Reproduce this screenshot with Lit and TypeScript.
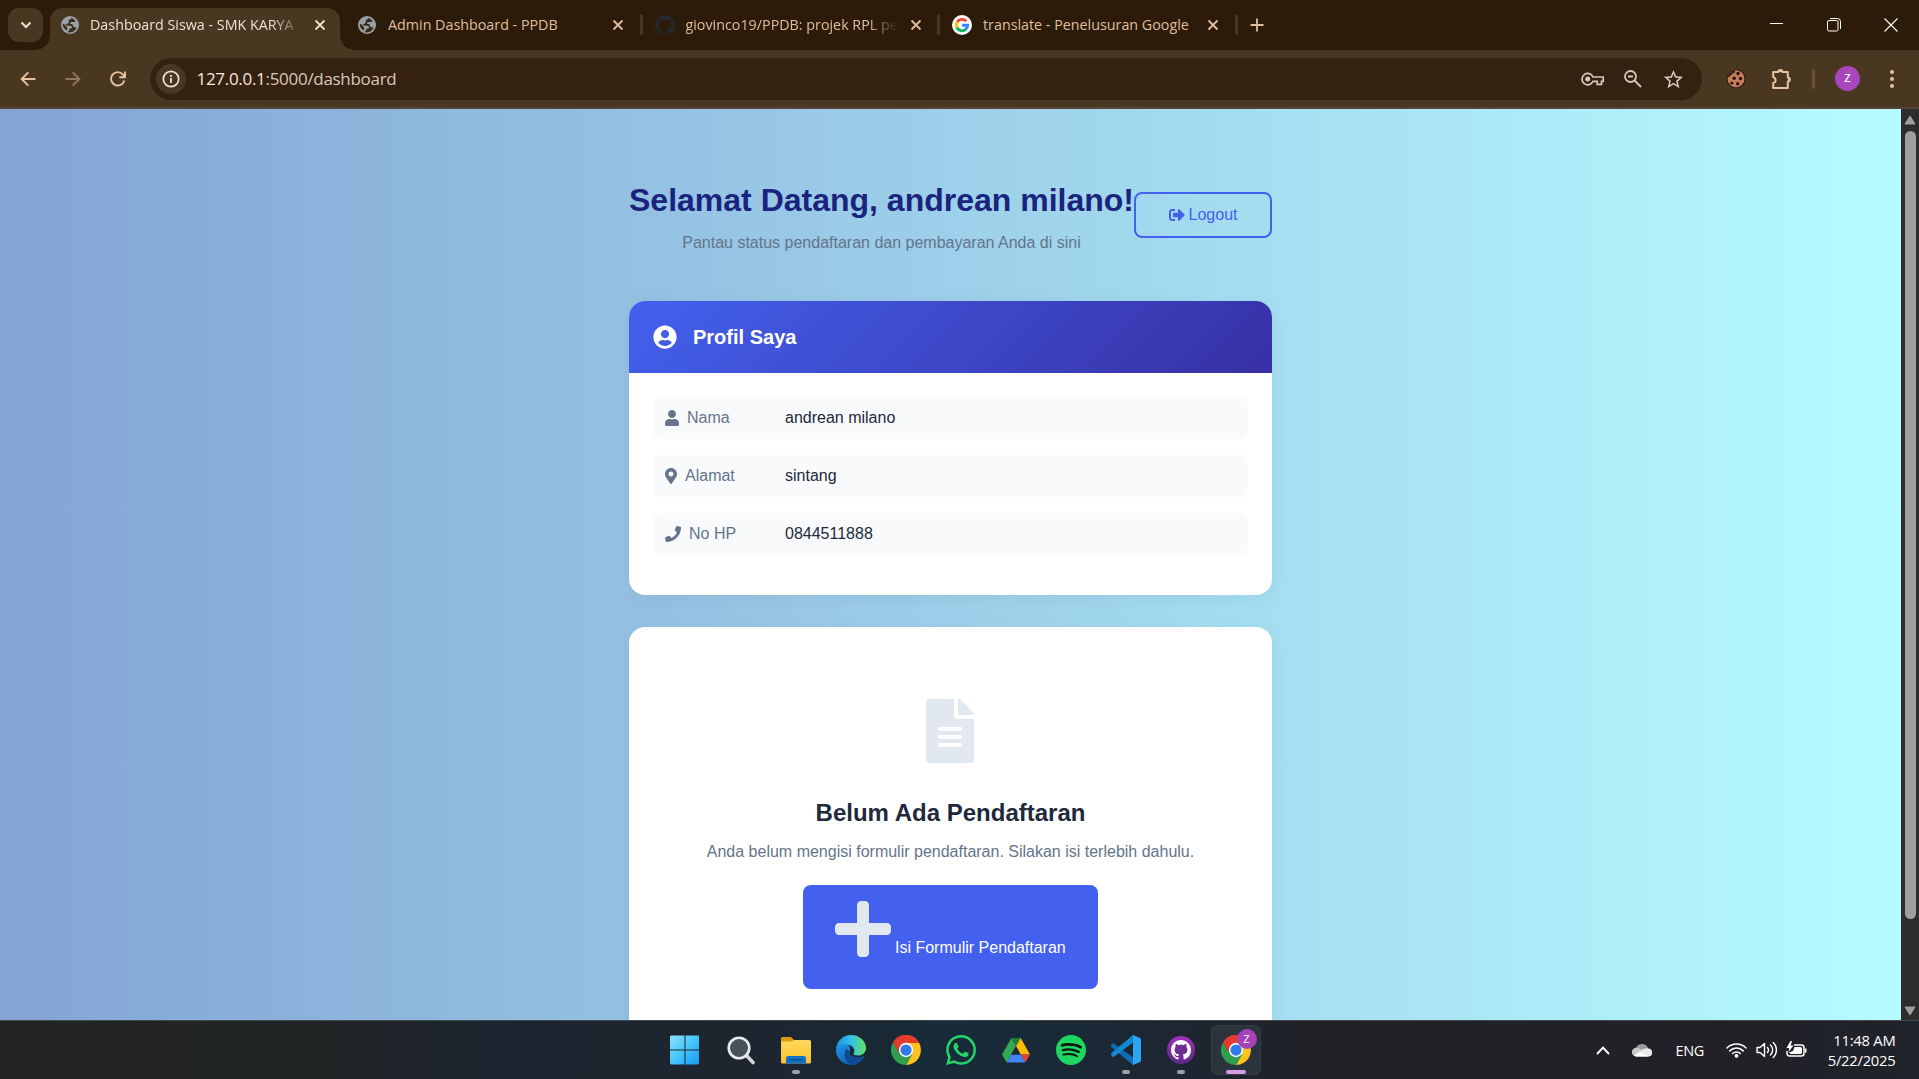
import { LitElement, html, svg, css, nothing } from "lit";
import { customElement } from "lit/decorators.js";

const GITHUB =
  "M8 0C3.58 0 0 3.58 0 8c0 3.54 2.29 6.53 5.47 7.59.4.07.55-.17.55-.38 0-.19-.01-.82-.01-1.49-2.01.37-2.53-.49-2.69-.94-.09-.23-.48-.94-.82-1.13-.28-.15-.68-.52-.01-.53.63-.01 1.08.58 1.23.82.72 1.21 1.87.87 2.33.66.07-.52.28-.87.51-1.07-1.78-.2-3.64-.89-3.64-3.95 0-.87.31-1.59.82-2.15-.08-.2-.36-1.02.08-2.12 0 0 .67-.21 2.2.82.64-.18 1.32-.27 2-.27s1.36.09 2 .27c1.53-1.04 2.2-.82 2.2-.82.44 1.1.16 1.92.08 2.12.51.56.82 1.27.82 2.15 0 3.07-1.87 3.75-3.65 3.95.29.25.54.73.54 1.48 0 1.07-.01 1.93-.01 2.2 0 .21.15.46.55.38A8.01 8.01 0 0 0 16 8c0-4.42-3.58-8-8-8z";

const icon = (w: number, h: number, viewBox: string, body: unknown) =>
  html`<svg class="icon" width=${w} height=${h} viewBox=${viewBox} fill="none">${body}</svg>`;

const fa = (w: number, h: number, box: number, d: string) =>
  icon(w, h, `0 0 ${box} 512`, svg`<path fill="currentColor" d=${d}></path>`);

const closeIcon = () =>
  icon(12, 12, "0 0 12 12", svg`<path d="M1.5 1.5l9 9M10.5 1.5l-9 9" stroke="currentColor" stroke-width="1.8"></path>`);

const globeIcon = () =>
  icon(18, 18, "0 0 18 18", svg`
    <circle cx="9" cy="9" r="9" fill="#9aa0a8"></circle>
    <path fill="#3c2c1b" d="M10.6 1.9C10.2 3.3 8.6 3.1 7.9 4.3c-.5.9.2 1.9-.3 2.7-.7 1-2.3.4-2.6 1.6-.2 1 1.2 1.1 2.3 1.1 1.3 0 3.3-.1 3.7 1 .3 1-.6 1.6-1.6 1.7-1.1.2-.9 1.3-1.5 2-.6.7-1.3 1.2-1.3 1.9A7.2 7.2 0 0 0 9 16.3 7.3 7.3 0 0 0 15.7 11.2c-1.2.5-2.5.3-3.2-.6-.8-1-.2-2-1.2-2.4-.9-.3-2.2.1-2.3-.9-.1-.9 1.1-1 2-1.2 1.2-.2 2.900-.1 3.600-.9A7.300 7.300 0 0 0 10.600 1.900z"></path>
    <path fill="#3c2c1b" d="M1.8 7.8c1.3.2 2.4 1.2 3.1 2.1.7.9 1.6 1.3 1.5 2.3-.1.9-.7 1.5-1 2.2A7.3 7.3 0 0 1 1.8 7.8z"></path>`);

const googleIcon = () =>
  icon(20, 20, "0 0 20 20", svg`
    <circle cx="10" cy="10" r="10" fill="#fff"></circle>
    <g stroke-width="2.9" fill="none">
      <path d="M14.2 6.2A5.7 5.7 0 0 0 5.1 7.1" stroke="#ff4131"></path>
      <path d="M5.3 6.8A5.7 5.7 0 0 0 5.2 13" stroke="#ffc107"></path>
      <path d="M4.9 12.5A5.7 5.7 0 0 0 13.8 14.3" stroke="#11b557"></path>
      <path d="M13.4 14.6A5.7 5.7 0 0 0 15.7 10.2H10.2" stroke="#3186ff"></path>
    </g>`);

const chromeIcon = () =>
  icon(30, 30, "0 0 48 48", svg`
    <path fill="#e33b2e" d="M24 24L3.2 12A24 24 0 0 1 44.8 12z"></path>
    <path fill="#fcc31e" d="M24 12.500H45A24 24 0 0 1 24 48L34 30z"></path>
    <path fill="#2f9e4f" d="M3.200 12L14 30 34 30 24 48A24 24 0 0 1 3.200 12z"></path>
    <path fill="#e33b2e" d="M3.200 12A24 24 0 0 1 45 12.500H24L14 18 13.500 29.500z"></path>
    <circle cx="24" cy="24" r="11.5" fill="#fff"></circle>
    <circle cx="24" cy="24" r="9" fill="#2f7bea"></circle>`);

@customElement("browser-chrome")
class BrowserChrome extends LitElement {
  static styles = css`
    :host { display: block; font-family: "Open Sans", "Noto Sans", sans-serif; }
    .icon { display: block; flex: none; }
    .strip { display: flex; height: 50px; background: #2d1b09; color: #dfbe9e; }
    .search { width: 35px; height: 34px; margin: 8px 3px 0 8px; border-radius: 11px; background: #4a3721; color: #f3dfd2; display: grid; place-items: center; }
    .tab { position: relative; width: 297.5px; box-sizing: border-box; height: 50px; display: flex; align-items: center; padding: 0 17px 0 13.5px; font-size: 14.3px; }
    .tab.active { width: 290px; height: 42px; margin: 8px 3.5px 0 4px; padding: 0 14px 8px 10px; background: #4a3721; border-radius: 13px 13px 0 0; color: #f3dfd2; }
    .tab.active::before, .tab.active::after { content: ""; position: absolute; bottom: 0; width: 14px; height: 14px; }
    .tab.active::before { left: -14px; background: radial-gradient(circle at 0 0, transparent 13.5px, #4a3721 14px); }
    .tab.active::after { right: -14px; background: radial-gradient(circle at 100% 0, transparent 13.5px, #4a3721 14px); }
    .fav { width: 20px; display: flex; justify-content: center; margin-right: 11px; flex: none; }
    .active .fav { margin-right: 10px; }
    .title { flex: none; width: 210px; white-space: nowrap; overflow: hidden; line-height: 24px; }
    .title.fade { -webkit-mask-image: linear-gradient(90deg, #000 182px, transparent 212px); mask-image: linear-gradient(90deg, #000 182px, transparent 212px); }
    .close { margin-left: auto; }
    .tab.line::after { content: ""; position: absolute; right: -1.5px; top: 14px; width: 3px; height: 21px; border-radius: 2px; background: #4a3721; }
    .plus { width: 42px; height: 50px; display: grid; place-items: center; }
    .controls { margin-left: auto; display: flex; color: #fff; height: 49px; }
    .ctl { width: 57px; display: grid; place-items: center; }
    .bar { display: flex; align-items: center; height: 57px; background: #4a3721; border-bottom: 2px solid #56443a; color: #e7c3a3; }
    .nav { display: flex; width: 150px; box-sizing: border-box; padding-left: 5px; }
    .nav span { width: 45px; display: grid; place-items: center; }
    .dim { opacity: .45; }
    .omni { width: 1552px; height: 42px; margin-top: 1px; border-radius: 21px; background: #35210f; display: flex; align-items: center; box-sizing: border-box; padding: 0 9px 0 6px; color: #d8c7bb; }
    .info { width: 30px; height: 30px; border-radius: 50%; background: #4a3721; display: grid; place-items: center; color: #f3dfd2; }
    .url { margin-left: 10.5px; font-size: 17px; line-height: 28px; letter-spacing: -0.3px; flex: 1; white-space: nowrap; }
    .host { color: #f7e9df; }
    .slot { width: 40px; display: grid; place-items: center; }
    .tools { display: flex; align-items: center; padding-left: 11px; }
    .tools .slot { width: 46px; }
    .sep { width: 3px; height: 20px; background: #6a4e36; border-radius: 2px; margin: 0 20px 0 7px; }
    .avatar { width: 25px; height: 25px; border-radius: 50%; background: #a846bb; color: #fff; font-size: 11px; font-weight: 600; line-height: 24px; text-align: center; }
    .dots { margin-left: 29px; }
  `;

  private tab(fav: unknown, title: string, cls = "", fade = false) {
    return html`<div class="tab ${cls}">
      <span class="fav">${fav}</span>
      <span class="title ${fade ? "fade" : ""}">${title}</span>
      <span class="close">${closeIcon()}</span>
    </div>`;
  }

  render() {
    return html`
      <div class="strip">
        <div class="search">${icon(12, 8, "0 0 12 8", svg`<path d="M1.5 1.5L6 6l4.5-4.5" stroke="currentColor" stroke-width="2"></path>`)}</div>
        ${this.tab(globeIcon(), "Dashboard Siswa - SMK KARYA", "active", true)}
        ${this.tab(globeIcon(), "Admin Dashboard - PPDB", "line")}
        ${this.tab(icon(20, 20, "0 0 16 16", svg`<path fill="#24292f" d=${GITHUB}></path>`), "giovinco19/PPDB: projek RPL pe", "line", true)}
        ${this.tab(googleIcon(), "translate - Penelusuran Google", "line")}
        <div class="plus">${icon(14, 14, "0 0 14 14", svg`<path d="M7 .5v13M.5 7h13" stroke="currentColor" stroke-width="1.8"></path>`)}</div>
        <div class="controls">
          <span class="ctl">${icon(13, 13, "0 0 13 13", svg`<path d="M0 5.5h13" stroke="currentColor"></path>`)}</span>
          <span class="ctl">${icon(14, 14, "0 0 14 14", svg`<rect x=".5" y="2.5" width="10.5" height="10.5" rx="1.5" stroke="currentColor"></rect><path d="M3 .5h7.5a3 3 0 0 1 3 3V11" stroke="currentColor"></path>`)}</span>
          <span class="ctl">${icon(14, 14, "0 0 14 14", svg`<path d="M.5.5l13 13M13.5.5l-13 13" stroke="currentColor" stroke-width="1.1"></path>`)}</span>
        </div>
      </div>
      <div class="bar">
        <div class="nav">
          <span>${icon(16, 16, "0 0 16 16", svg`<path d="M15.5 8H2M8.3 1.3L1.6 8l6.7 6.7" stroke="currentColor" stroke-width="1.9"></path>`)}</span>
          <span class="dim">${icon(16, 16, "0 0 16 16", svg`<path d="M.5 8H14M7.7 1.3L14.4 8l-6.7 6.7" stroke="currentColor" stroke-width="1.9"></path>`)}</span>
          <span>${icon(16, 16, "0 0 16 16", svg`<path d="M14.3 9.5A6.7 6.7 0 1 1 13 3.6L14.6 5.5M15 .5V6.2H9.3" stroke="currentColor" stroke-width="1.9"></path>`)}</span>
        </div>
        <div class="omni">
          <span class="info">${icon(18, 18, "0 0 18 18", svg`<circle cx="9" cy="9" r="7.7" stroke="currentColor" stroke-width="1.7"></circle><path d="M9 8v5M9 5v1.9" stroke="currentColor" stroke-width="1.8"></path>`)}</span>
          <span class="url"><span class="host">127.0.0.1</span>:5000/dashboard</span>
          <span class="slot">${icon(24, 14, "0 0 24 14", svg`<path d="M12 5a5.7 5.7 0 1 0 0 4.3h4.2v3h4.3v-3h1.700V5z" stroke="currentColor" stroke-width="1.7"></path><circle cx="6.7" cy="7.1" r="2.5" fill="currentColor"></circle>`)}</span>
          <span class="slot">${icon(18, 18, "0 0 18 18", svg`<circle cx="6.5" cy="6.5" r="5.5" stroke="currentColor" stroke-width="1.8"></circle><path d="M10.5 10.5l6.5 6.5M4 6.5h5" stroke="currentColor" stroke-width="1.8"></path>`)}</span>
          <span class="slot">${icon(23, 23, "0 0 24 24", svg`<path fill="currentColor" d="M22 9.24l-7.19-.62L12 2 9.19 8.63 2 9.24l5.46 4.73L5.82 21 12 17.27 18.18 21l-1.63-7.03L22 9.24zM12 15.4l-3.76 2.27 1-4.28-3.32-2.88 4.38-.38L12 6.1l1.71 4.04 4.38.38-3.32 2.88 1 4.28L12 15.4z"></path>`)}</span>
        </div>
        <div class="tools">
          <span class="slot">${icon(20, 20, "0 0 20 20", svg`
            <path d="M8.5 1c1.6-.4 3.6-.2 5 .6 3.3 1.4 5.5 4.5 5.5 8.4a9 9 0 0 1-18 0c.1-1.2.1-2 .7-3l2.1.2L3.6 5l2.2.3.2-2.5 2.2.7z" fill="#c77d5a" stroke="#2c180c" stroke-width="1.1"></path>
            <g fill="#22120a"><circle cx="12" cy="4.5" r="1.7"></circle><circle cx="8.2" cy="9.3" r="1.7"></circle><circle cx="14.5" cy="9.5" r="1.7"></circle><circle cx="5.8" cy="14" r="1.5"></circle><circle cx="11.7" cy="14.8" r="1.7"></circle></g>`)}</span>
          <span class="slot">${icon(22, 22, "0 0 22 22", svg`<path d="M2.2 4h5.2a2 2 0 0 1 4 0h5.4v5.500a2 2 0 0 1 0 4V20H2.200v-5a2.900 2.900 0 0 0 0-5.700z" stroke="currentColor" stroke-width="2" stroke-linejoin="round"></path><path d="M7.5 4a2 2 0 0 1 4 0zM17 9.5a2 2 0 0 1 0 4z" fill="currentColor"></path>`)}</span>
          <span class="sep"></span>
          <span class="avatar">Z</span>
          <span class="dots">${icon(6, 20, "0 0 6 20", svg`<g fill="currentColor"><circle cx="3" cy="3" r="2"></circle><circle cx="3" cy="10" r="2"></circle><circle cx="3" cy="17" r="2"></circle></g>`)}</span>
        </div>
      </div>`;
  }
}

const PROFILE = [
  {
    icon: fa(14, 16, 448, "M224 256c70.7 0 128-57.3 128-128S294.7 0 224 0 96 57.3 96 128s57.3 128 128 128zm89.6 32h-16.7c-22.2 10.2-46.9 16-72.9 16s-50.6-5.8-72.9-16h-16.7C60.2 288 0 348.2 0 422.4V464c0 26.5 21.5 48 48 48h352c26.5 0 48-21.5 48-48v-41.6c0-74.2-60.2-134.4-134.4-134.4z"),
    label: "Nama",
    value: "andrean milano",
  },
  {
    icon: fa(12, 16, 384, "M172.268 501.67C26.97 291.031 0 269.413 0 192 0 85.961 85.961 0 192 0s192 85.961 192 192c0 77.413-26.97 99.031-172.268 309.67-9.535 13.774-29.93 13.773-39.464 0zM192 272c44.183 0 80-35.817 80-80s-35.817-80-80-80-80 35.817-80 80 35.817 80 80 80z"),
    label: "Alamat",
    value: "sintang",
  },
  {
    icon: fa(16, 16, 512, "M493.4 24.6l-104-24c-11.3-2.6-22.9 3.3-27.5 13.9l-48 112c-4.2 9.8-1.4 21.3 6.9 28l60.6 49.6c-36 76.7-98.9 140.5-177.2 177.2l-49.6-60.6c-6.8-8.3-18.2-11.1-28-6.9l-112 48C3.9 366.5-2 378.1.6 389.4l24 104C27.1 504.2 36.7 512 48 512c256.1 0 464-207.5 464-464 0-11.2-7.7-20.9-18.6-23.4z"),
    label: "No HP",
    value: "0844511888",
  },
];

@customElement("student-dashboard")
class StudentDashboard extends LitElement {
  static styles = css`
    :host { display: flex; min-height: 0; font-family: "Liberation Sans", Arial, sans-serif; font-size: 16px; color: #1e293b; }
    .icon { display: block; flex: none; }
    .page { flex: 1; overflow: hidden; background: linear-gradient(to right, #83a4d4, #b6fbff); }
    .content { width: 643px; margin: 0 auto; padding-top: 71px; }
    .head { display: flex; align-items: flex-start; justify-content: space-between; height: 73px; text-align: center; }
    h1 { margin: 0; font-size: 32px; line-height: 40px; color: #1a237e; white-space: nowrap; }
    .lead { margin: 11px 0 0; line-height: 24px; color: #64748b; }
    .logout { box-sizing: border-box; width: 138px; height: 46px; margin-top: 12px; border: 2px solid #4361ee; border-radius: 8px; color: #4361ee; display: flex; align-items: center; justify-content: center; gap: 4px; padding-bottom: 1px; flex: none; }
    .card { background: #fff; border-radius: 16px; overflow: hidden; box-shadow: 0 4px 20px rgba(0, 0, 0, .05); }
    .profile { margin-top: 48px; height: 294px; }
    .card-head { display: flex; align-items: center; gap: 16px; height: 72px; padding: 0 24px; color: #fff; background: linear-gradient(135deg, #4361ee, #3730a3); font-size: 20px; font-weight: 700; }
    .rows { display: flex; flex-direction: column; gap: 16px; padding: 24px; }
    .row { display: flex; align-items: center; height: 42px; padding: 0 12px; background: #f8fafc; border-radius: 8px; }
    .label { width: 120px; display: flex; align-items: center; gap: 8px; color: #64748b; }
    .empty { margin-top: 32px; padding-top: 72px; height: 400px; display: flex; flex-direction: column; align-items: center; }
    .doc { color: #e2e8f0; margin-right: 1px; }
    h2 { margin: 34px 0 0; font-size: 24px; line-height: 32px; }
    .empty p { margin: 11px 0 0; line-height: 24px; color: #64748b; }
    .fill { box-sizing: border-box; width: 295px; height: 104px; margin-top: 21px; padding: 12px 32px 0; display: flex; gap: 4px; border-radius: 8px; background: #4361ee; color: #fff; white-space: nowrap; }
    .sym { color: #e2e8f0; }
    .text { padding-top: 41px; line-height: 20px; }
    .scroll { width: 18px; background: #2c2c2c; display: flex; flex-direction: column; align-items: center; box-sizing: border-box; padding: 6px 0 4px; color: #9f9f9f; }
    .thumb { width: 11px; height: 788px; border-radius: 6px; background: #9f9f9f; margin: 6px 0 auto; }
  `;

  render() {
    return html`
      <div class="page">
        <div class="content">
          <div class="head">
            <div>
              <h1>Selamat Datang, andrean milano!</h1>
              <p class="lead">Pantau status pendaftaran dan pembayaran Anda di sini</p>
            </div>
            <div class="logout">
              ${fa(16, 16, 512, "M497 273L329 441c-15 15-41 4.5-41-17v-96H152c-13.3 0-24-10.7-24-24v-96c0-13.3 10.7-24 24-24h136V88c0-21.4 25.9-32 41-17l168 168c9.3 9.4 9.3 24.6 0 34zM192 436v-40c0-6.6-5.4-12-12-12H96c-17.7 0-32-14.3-32-32V160c0-17.7 14.3-32 32-32h84c6.6 0 12-5.4 12-12V76c0-6.6-5.4-12-12-12H96c-53 0-96 43-96 96v192c0 53 43 96 96 96h84c6.6 0 12-5.4 12-12z")}
              <span>Logout</span>
            </div>
          </div>
          <section class="card profile">
            <div class="card-head">
              ${icon(24, 24, "0 0 496 512", svg`<path fill="currentColor" d="M248 8C111 8 0 119 0 256s111 248 248 248 248-111 248-248S385 8 248 8zm0 96c48.6 0 88 39.4 88 88s-39.4 88-88 88-88-39.4-88-88 39.4-88 88-88zm0 344c-58.7 0-111.3-26.6-146.5-68.2 18.8-35.4 55.6-59.8 98.5-59.8 2.4 0 4.8.4 7.1 1.1 13 4.2 26.6 6.9 40.9 6.9 14.3 0 28-2.7 40.9-6.9 2.3-.7 4.7-1.1 7.1-1.1 42.9 0 79.7 24.4 98.5 59.8C359.3 421.4 306.7 448 248 448z"></path>`)}
              <span>Profil Saya</span>
            </div>
            <div class="rows">
              ${PROFILE.map((r) => html`<div class="row"><span class="label">${r.icon}<span>${r.label}</span></span><span>${r.value}</span></div>`)}
            </div>
          </section>
          <section class="card empty">
            <span class="doc">${fa(48, 64, 384, "M224 136V0H24C10.7 0 0 10.7 0 24v464c0 13.3 10.7 24 24 24h336c13.3 0 24-10.7 24-24V160H248c-13.2 0-24-10.8-24-24zm64 236c0 6.6-5.4 12-12 12H108c-6.6 0-12-5.4-12-12v-8c0-6.6 5.4-12 12-12h168c6.6 0 12 5.4 12 12v8zm0-64c0 6.6-5.4 12-12 12H108c-6.6 0-12-5.4-12-12v-8c0-6.6 5.4-12 12-12h168c6.6 0 12 5.4 12 12v8zm0-72v8c0 6.6-5.4 12-12 12H108c-6.6 0-12-5.4-12-12v-8c0-6.6 5.4-12 12-12h168c6.6 0 12 5.4 12 12zm96-114.1v6.1H256V0h6.1c6.4 0 12.5 2.5 17 7l97.9 98c4.5 4.5 7 10.6 7 16.9z")}</span>
            <h2>Belum Ada Pendaftaran</h2>
            <p>Anda belum mengisi formulir pendaftaran. Silakan isi terlebih dahulu.</p>
            <div class="fill">
              <span class="sym">${fa(56, 64, 448, "M416 208H272V64c0-17.67-14.33-32-32-32h-32c-17.67 0-32 14.33-32 32v144H32c-17.67 0-32 14.33-32 32v32c0 17.67 14.33 32 32 32h144v144c0 17.67 14.33 32 32 32h32c17.67 0 32-14.33 32-32V304h144c17.67 0 32-14.33 32-32v-32c0-17.67-14.33-32-32-32z")}</span>
              <span class="text">Isi Formulir Pendaftaran</span>
            </div>
          </section>
        </div>
      </div>
      <div class="scroll">
        ${icon(12, 10, "0 0 12 10", svg`<path d="M6 1l5 8H1z" fill="currentColor" stroke="currentColor" stroke-linejoin="round"></path>`)}
        <div class="thumb"></div>
        ${icon(12, 10, "0 0 12 10", svg`<path d="M6 9l5-8H1z" fill="currentColor" stroke="currentColor" stroke-linejoin="round"></path>`)}
      </div>`;
  }
}

const APPS = [
  {
    art: icon(32, 30, "0 0 32 30", svg`<defs><linearGradient id="w" x1="0" y1="0" x2="30" y2="30" gradientUnits="userSpaceOnUse"><stop stop-color="#8fe3fb"></stop><stop offset=".5" stop-color="#45c5fa"></stop><stop offset="1" stop-color="#1597f5"></stop></linearGradient></defs><path fill="url(#w)" d="M1 .5h13.5V14.5H0V1.500zM15.500.500H28.500L29 1v13.500H15.500zM0 15.500h14.500v14H1l-1-1zM15.500 15.500H29v13l-1 1H15.500z"></path>`),
    mark: "",
  },
  {
    art: icon(28, 30, "0 0 28 30", svg`<path d="M19 20l7 7.5" stroke="#d3d5d8" stroke-width="3.6" stroke-linecap="round"></path><circle cx="12" cy="13" r="10.3" fill="#47525c" stroke="#e9eaec" stroke-width="2.6"></circle>`),
    mark: "",
  },
  {
    art: icon(30, 30, "0 0 30 30", svg`<defs><linearGradient id="f" x2="0" y2="1"><stop stop-color="#ffd95e"></stop><stop offset="1" stop-color="#fcc02e"></stop></linearGradient></defs><path fill="#dd9a0b" d="M0 3.5A1.5 1.5 0 0 1 1.5 2H10l3.5 3.5V10H0z"></path><path fill="url(#f)" d="M0 6.5h10.5l2.5-1.5h15.500A1.500 1.500 0 0 1 30 6.500V27a1.500 1.500 0 0 1-1.500 1.500h-27A1.500 1.500 0 0 1 0 27z"></path><path fill="#0f73c8" d="M5 28.5v-5a2.5 2.5 0 0 1 2.5-2.5h15a2.5 2.5 0 0 1 2.5 2.5v5z"></path><path d="M8.5 24.8h13" stroke="#0a4a86" stroke-width="1.2"></path>`),
    mark: "open",
  },
  {
    art: icon(30, 30, "0 0 30 30", svg`<defs><linearGradient id="e1" x1="0" y1="8" x2="30" y2="8" gradientUnits="userSpaceOnUse"><stop stop-color="#1a8fdc"></stop><stop offset=".5" stop-color="#35c1e8"></stop><stop offset="1" stop-color="#62e05c"></stop></linearGradient><linearGradient id="e2" x1="8" y1="10" x2="20" y2="30" gradientUnits="userSpaceOnUse"><stop stop-color="#1c8de0"></stop><stop offset="1" stop-color="#0c59a4"></stop></linearGradient></defs>
      <path fill="url(#e2)" d="M0 15C0 9 5 7.5 9 8.5c5 1 6 5 4.5 8C12.5 21 18 24.5 28 21.5 25.5 27 20 30 15 30A15 15 0 0 1 0 15z"></path>
      <path fill="#114a94" d="M10.5 13.5C6.5 19 9 27.5 16 29.9c5-.4 9.5-3.4 11.8-8 .3-.7-.3-1-.8-.7-6 2.5-13.5.8-14-5z"></path>
      <path fill="url(#e1)" d="M0 14C.5 6 7 0 15 0c9 0 15 6.5 15 13 0 5-4 7.5-8 7.5-3.5 0-5-1-4.5-2 2-2.5.5-7-4-8.500C8 8.500 2 9.500 0 14z"></path>`),
    mark: "",
  },
  { art: chromeIcon(), mark: "" },
  {
    art: icon(30, 30, "0 0 24 24", svg`<path fill="#25d366" d="M17.472 14.382c-.297-.149-1.758-.867-2.03-.967-.273-.099-.471-.148-.67.15-.197.297-.767.966-.94 1.164-.173.199-.347.223-.644.075-.297-.15-1.255-.463-2.39-1.475-.883-.788-1.48-1.761-1.653-2.059-.173-.297-.018-.458.13-.606.134-.133.298-.347.446-.52.149-.174.198-.298.298-.497.099-.198.05-.371-.025-.52-.075-.149-.669-1.612-.916-2.207-.242-.579-.487-.5-.669-.51-.173-.008-.371-.01-.57-.01-.198 0-.52.074-.792.372-.272.297-1.04 1.016-1.04 2.479 0 1.462 1.065 2.875 1.213 3.074.149.198 2.096 3.2 5.077 4.487.709.306 1.262.489 1.694.625.712.227 1.36.195 1.871.118.571-.085 1.758-.719 2.006-1.413.248-.694.248-1.289.173-1.413-.074-.124-.272-.198-.57-.347m-5.421 7.403h-.004a9.87 9.87 0 01-5.031-1.378l-.361-.214-3.741.982.998-3.648-.235-.374a9.86 9.86 0 01-1.51-5.26c.001-5.45 4.436-9.884 9.888-9.884 2.64 0 5.122 1.03 6.988 2.898a9.825 9.825 0 012.893 6.994c-.003 5.45-4.437 9.884-9.885 9.884m8.413-18.297A11.815 11.815 0 0012.05 0C5.495 0 .16 5.335.157 11.892c0 2.096.547 4.142 1.588 5.945L.057 24l6.305-1.654a11.882 11.882 0 005.683 1.448h.005c6.554 0 11.89-5.335 11.893-11.893a11.821 11.821 0 00-3.48-8.413z"></path>`),
    mark: "",
  },
  {
    art: icon(28, 25, "0 0 28 25", svg`<path fill="#34a853" d="M9.3 0L0 16.5 4.7 24.5 14 8.2z"></path><path fill="#188038" d="M9.3 0h9.4L14 8.2z"></path><path fill="#fbbc04" d="M18.7 0L28 16.5H18.7L14 8.2z"></path><path fill="#ea4335" d="M18.7 16.5H28l-4.7 8z"></path><path fill="#4285f4" d="M9.4 16.5h9.3l4.6 8H4.7z"></path><path fill="#1a2a37" d="M14 8.2l4.7 8.3H9.4z"></path>`),
    mark: "",
  },
  {
    art: icon(30, 30, "0 0 24 24", svg`<circle cx="12" cy="12" r="11" fill="#14140f"></circle><path fill="#1ed760" d="M12 0C5.4 0 0 5.4 0 12s5.4 12 12 12 12-5.4 12-12S18.66 0 12 0zm5.521 17.34c-.24.359-.66.48-1.021.24-2.82-1.74-6.36-2.101-10.561-1.141-.418.122-.779-.179-.899-.539-.12-.421.18-.78.54-.9 4.56-1.021 8.52-.6 11.64 1.32.42.18.479.659.301 1.02zm1.44-3.3c-.301.42-.841.6-1.262.3-3.239-1.98-8.159-2.58-11.939-1.38-.479.12-1.02-.12-1.14-.6-.12-.48.12-1.021.6-1.141C9.6 9.9 15 10.561 18.72 12.84c.361.181.54.78.241 1.2zm.12-3.36C15.24 8.4 8.82 8.16 5.16 9.301c-.6.179-1.2-.181-1.38-.721-.18-.601.18-1.2.72-1.381 4.26-1.26 11.28-1.02 15.721 1.621.539.3.719 1.02.419 1.56-.299.421-1.02.599-1.559.3z"></path>`),
    mark: "",
  },
  {
    art: icon(30, 30, "0 0 30 30", svg`<path fill="#0a6fb8" d="M0 10l2.2-2L22 22.5V30L.2 12z"></path><path fill="#1489d3" d="M0 20l2.2 2.2L22 7.5V0L.2 18.3z"></path><path fill="#2ba5f2" d="M22 0l6.7 2.8A2 2 0 0 1 30 4.5v21a2 2 0 0 1-1.3 1.8L22 30z"></path>`),
    mark: "open",
  },
  {
    art: icon(28, 28, "0 0 28 28", svg`<defs><linearGradient id="g" x2="0" y2="1"><stop stop-color="#a232bb"></stop><stop offset="1" stop-color="#5a2a82"></stop></linearGradient></defs><circle cx="14" cy="14" r="14" fill="url(#g)"></circle><circle cx="14" cy="14" r="10" fill="#6c2c90"></circle><g transform="translate(4 4) scale(1.25)"><path fill="#fff" d=${GITHUB}></path></g>`),
    mark: "open",
  },
  { art: chromeIcon(), mark: "current" },
];

@customElement("task-bar")
class TaskBar extends LitElement {
  static styles = css`
    :host { display: grid; grid-template-columns: 658.5px 605px 1fr; grid-template-rows: 58px; height: 59px; box-sizing: border-box; border-top: 1px solid #43484b; color: #fff; font-family: "Open Sans", "Noto Sans", sans-serif;
      background: linear-gradient(90deg, #232323 0, #212526 330px, #1e2530 480px, #1d252f 750px, #172b38 940px, #1b2936 1090px, #1e2530 1200px, #212127 1310px, #212127 1700px, #1f242a 1919px); }
    .icon { display: block; flex: none; }
    .apps { display: grid; grid-template-columns: repeat(11, 55px); grid-column: 2; }
    .app { position: relative; display: grid; place-items: center; }
    .app.current::before { content: ""; position: absolute; inset: 4px 2.5px; border-radius: 6px; background: #2b333c; border: 1px solid #353c44; box-sizing: border-box; }
    .app.current .icon { position: relative; }
    .app.open::after, .app.current::after { content: ""; position: absolute; left: 50%; bottom: 5px; width: 8px; height: 4px; margin-left: -4px; border-radius: 2px; background: #9aa0a6; }
    .app.current::after { width: 20px; margin-left: -10px; background: #d99be3; }
    .badge { position: absolute; left: 28px; top: 8px; width: 20px; height: 20px; border-radius: 50%; background: #a642b8; font-size: 11px; font-weight: 600; line-height: 20px; text-align: center; color: #f1d9f5; }
    .tray { display: flex; align-items: center; justify-content: flex-end; padding-right: 23.5px; }
    .chev { margin-right: 22px; }
    .cloud { margin-right: 24px; }
    .lang { width: 29px; font-size: 14.5px; letter-spacing: -0.4px; margin-right: 21px; }
    .wifi { margin-right: 9px; }
    .vol { margin-right: 9px; }
    .clock { width: 89px; text-align: right; font-size: 14.8px; line-height: 20px; letter-spacing: -0.25px; white-space: nowrap; }
  `;

  render() {
    return html`
      <div class="apps">
        ${APPS.map((a) => html`<div class="app ${a.mark}">${a.art}${a.mark === "current" ? html`<span class="badge">Z</span>` : nothing}</div>`)}
      </div>
      <div class="tray">
        <span class="chev">${icon(14, 9, "0 0 14 9", svg`<path d="M1 8l6-6.3L13 8" stroke="#fff" stroke-width="1.9"></path>`)}</span>
        <span class="cloud">${icon(20, 14, "0 0 20 14", svg`<path fill="#9c9c9c" d="M4 5A6.5 6.500 0 0 1 16 5l2 4H2z"></path><path fill="#c9c9c9" d="M4 13.5a4.3 4.3 0 0 1 .4-8.7C7 4.5 8 6 12 9z"></path><path fill="#e6e6e6" d="M3.5 13.5C6 8.5 12 4.5 16 5.5a4 4 0 0 1 .4 8z"></path><path fill="#fff" d="M1.5 12.5L8 9l9 4.5H4.5z"></path>`)}</span>
        <span class="lang">ENG</span>
        <span class="wifi">${icon(21, 16, "0 0 21 16", svg`<g stroke="#fff" stroke-width="1.5" stroke-linecap="round"><path d="M1 6a13.3 13.3 0 0 1 19 0M3.8 8.9a9.4 9.4 0 0 1 13.4 0M6.6 11.5a5.5 5.5 0 0 1 7.8 0"></path></g><circle cx="10.5" cy="13.8" r="1.9" fill="#fff"></circle>`)}</span>
        <span class="vol">${icon(21, 18, "0 0 21 18", svg`<g stroke="#fff" stroke-width="1.4" stroke-linejoin="round" stroke-linecap="round"><path d="M1 6.5v5h3l4.5 4V2.5L4 6.5z"></path><path d="M11.5 6.5a4 4 0 0 1 0 5M14.5 4a7 7 0 0 1 0 10M17.3 1.5a10.5 10.5 0 0 1 0 15"></path></g>`)}</span>
        <span>${icon(21, 18, "0 0 21 18", svg`<path d="M8 4h7.5A2.5 2.5 0 0 1 18 6.5v6a2.5 2.5 0 0 1-2.5 2.5h-12A2.5 2.5 0 0 1 1 12.5V10" stroke="#fff" stroke-width="1.5"></path><path d="M8.5 6h6A1.5 1.5 0 0 1 16 7.5v4a1.5 1.5 0 0 1-1.500 1.500h-10L3 11.500 7 10zM19 7.500h1.500v4H19zM4.500 0L.500 7h2.700L2.500 11 7.500 4.500H4.700L6 0z" fill="#fff"></path>`)}</span>
        <div class="clock"><div>11:48 AM</div><div>5/22/2025</div></div>
      </div>`;
  }
}

@customElement("app-root")
class AppRoot extends LitElement {
  static styles = css`
    :host { display: flex; flex-direction: column; width: 1919px; height: 1079px; overflow: hidden; }
    .page { flex: 1; }
  `;

  render() {
    return html`<browser-chrome></browser-chrome><student-dashboard class="page"></student-dashboard><task-bar></task-bar>`;
  }
}
